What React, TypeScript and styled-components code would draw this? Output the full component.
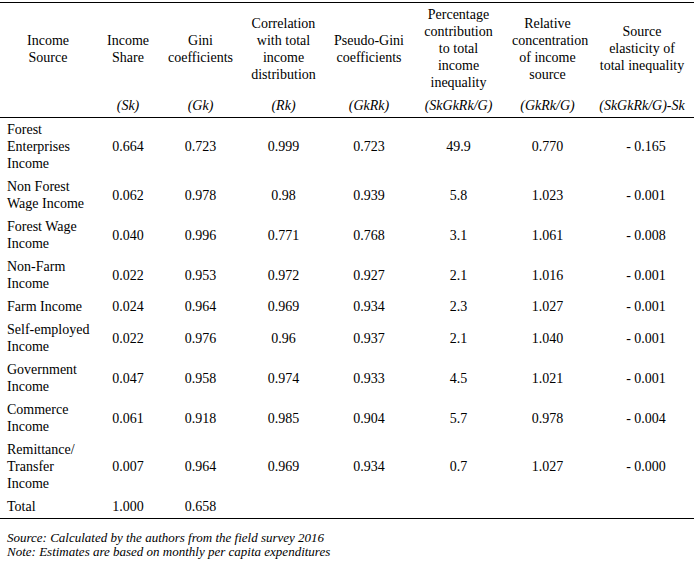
import React from "react";
import styled, { createGlobalStyle } from "styled-components";

const GlobalStyle = createGlobalStyle`
  body {
    margin: 0;
    background: #ffffff;
    font-family: "Liberation Serif", "Times New Roman", serif;
    color: #000000;
  }
`;

const Wrapper = styled.div`
  width: 694px;
  padding-top: 2px;
`;

const Table = styled.table`
  width: 694px;
  border-collapse: collapse;
  table-layout: fixed;
  font-size: 14px;
  line-height: 17px;
  border-top: 1px solid #000;
  border-bottom: 1px solid #000;
`;

const HeadCell = styled.th`
  font-weight: normal;
  text-align: center;
  vertical-align: middle;
  padding: 3px 7px;
`;

const SymbolRow = styled.tr`
  border-bottom: 1px solid #000;
`;

const SymbolCell = styled.td`
  font-style: italic;
  text-align: center;
  padding: 3px 2px;
  white-space: nowrap;
`;

const NameCell = styled.td`
  text-align: left;
  vertical-align: middle;
  padding: 3px 2px 3px 7px;
`;

const NamePart = styled.span`
  white-space: nowrap;
`;

const Cell = styled.td<{ $shift?: boolean }>`
  text-align: center;
  vertical-align: middle;
  padding: ${(p) => (p.$shift ? "3px 0 3px 8px" : "3px 4px")};
`;

const Notes = styled.div`
  margin-top: 12px;
  padding-left: 7px;
  font-style: italic;
  font-size: 13px;
  line-height: 14px;
`;

const widths = [96, 64, 81, 85, 86, 93, 85, 104];

const headers = [
  "Income Source",
  "Income Share",
  "Gini coefficients",
  "Correlation with total income distribution",
  "Pseudo-Gini coefficients",
  "Percentage contribution to total income inequality",
  "Relative concentration of income source",
  "Source elasticity of total inequality",
];

const symbols = [
  "",
  "(Sk)",
  "(Gk)",
  "(Rk)",
  "(GkRk)",
  "(SkGkRk/G)",
  "(GkRk/G)",
  "(SkGkRk/G)-Sk",
];

type Row = { name: string[]; values: string[] };

const rows: Row[] = [
  { name: ["Forest", "Enterprises", "Income"], values: ["0.664", "0.723", "0.999", "0.723", "49.9", "0.770", "- 0.165"] },
  { name: ["Non Forest", "Wage Income"], values: ["0.062", "0.978", "0.98", "0.939", "5.8", "1.023", "- 0.001"] },
  { name: ["Forest Wage", "Income"], values: ["0.040", "0.996", "0.771", "0.768", "3.1", "1.061", "- 0.008"] },
  { name: ["Non-Farm", "Income"], values: ["0.022", "0.953", "0.972", "0.927", "2.1", "1.016", "- 0.001"] },
  { name: ["Farm Income"], values: ["0.024", "0.964", "0.969", "0.934", "2.3", "1.027", "- 0.001"] },
  { name: ["Self-employed", "Income"], values: ["0.022", "0.976", "0.96", "0.937", "2.1", "1.040", "- 0.001"] },
  { name: ["Government", "Income"], values: ["0.047", "0.958", "0.974", "0.933", "4.5", "1.021", "- 0.001"] },
  { name: ["Commerce", "Income"], values: ["0.061", "0.918", "0.985", "0.904", "5.7", "0.978", "- 0.004"] },
  { name: ["Remittance/", "Transfer", "Income"], values: ["0.007", "0.964", "0.969", "0.934", "0.7", "1.027", "- 0.000"] },
  { name: ["Total"], values: ["1.000", "0.658", "", "", "", "", ""] },
];

const App: React.FC = () => {
  return (
    <Wrapper>
      <GlobalStyle />
      <Table>
        <colgroup>
          {widths.map((w, i) => (
            <col key={i} width={w} />
          ))}
        </colgroup>
        <thead>
          <tr>
            {headers.map((h) => (
              <HeadCell key={h}>{h}</HeadCell>
            ))}
          </tr>
          <SymbolRow>
            {symbols.map((s, i) => (
              <SymbolCell key={i}>{s}</SymbolCell>
            ))}
          </SymbolRow>
        </thead>
        <tbody>
          {rows.map((row) => (
            <tr key={row.name.join(" ")}>
              <NameCell>
                {row.name.map((part, i) => (
                  <React.Fragment key={i}>
                    {i > 0 && <br />}
                    <NamePart>{part}</NamePart>
                  </React.Fragment>
                ))}
              </NameCell>
              {row.values.map((v, i) => (
                <Cell key={i} $shift={i === row.values.length - 1}>
                  {v}
                </Cell>
              ))}
            </tr>
          ))}
        </tbody>
      </Table>
      <Notes>
        Source: Calculated by the authors from the field survey 2016
        <br />
        Note: Estimates are based on monthly per capita expenditures
      </Notes>
    </Wrapper>
  );
};

export default App;
